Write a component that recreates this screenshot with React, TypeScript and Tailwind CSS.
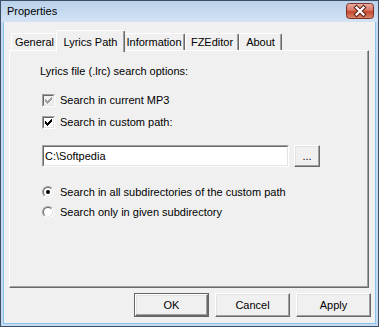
import React from 'react';

const TABS = [
  { title: 'General', w: 'w-[47px]' },
  { title: 'Lyrics Path', w: 'w-[69px]', active: true },
  { title: 'Information', w: 'w-[62px]' },
  { title: 'FZEditor', w: 'w-[54px]' },
  { title: 'About', w: 'w-[43px]' },
];

function CheckMark({ color }: { color: string }) {
  return (
    <svg width="7" height="7" viewBox="0 0 7 7" shapeRendering="crispEdges">
      <path
        fill={color}
        d="M0 2h1v3H0z M1 3h1v3H1z M2 4h1v3H2z M3 3h1v3H3z M4 2h1v3H4z M5 1h1v3H5z M6 0h1v3H6z"
      />
    </svg>
  );
}

function Checkbox({ label, checked, disabled }: { label: string; checked?: boolean; disabled?: boolean }) {
  return (
    <div className="flex items-center h-[14px] ml-[2px]">
      <span className="w-[13px] h-[13px] flex border border-t-[#a0a0a0] border-l-[#a0a0a0] border-r-white border-b-white">
        <span
          className={`flex-1 flex items-center justify-center border border-t-[#696969] border-l-[#696969] border-r-[#e3e3e3] border-b-[#e3e3e3] ${disabled ? 'bg-[#f0f0f0]' : 'bg-white'}`}
        >
          {checked && <CheckMark color={disabled ? '#a0a0a0' : '#000'} />}
        </span>
      </span>
      <span className="ml-[5px] leading-none">{label}</span>
    </div>
  );
}

function Radio({ label, checked }: { label: string; checked?: boolean }) {
  return (
    <div className="flex items-center h-[14px] ml-[2px]">
      <span className="w-[12px] h-[12px] flex rounded-full border border-t-[#a0a0a0] border-l-[#a0a0a0] border-r-white border-b-white">
        <span className="flex-1 flex items-center justify-center rounded-full border border-t-[#696969] border-l-[#696969] border-r-[#e3e3e3] border-b-[#e3e3e3] bg-white">
          {checked && <span className="w-[4px] h-[4px] rounded-full bg-black" />}
        </span>
      </span>
      <span className="ml-[6px] leading-none">{label}</span>
    </div>
  );
}

function PushButton({ label, isDefault }: { label: string; isDefault?: boolean }) {
  return (
    <div className={`w-[75px] h-[24px] flex ${isDefault ? 'border border-[#646464]' : ''}`}>
      <button className="flex-1 flex items-center justify-center bg-[#f0f0f0] border border-t-white border-l-white border-r-[#696969] border-b-[#696969] shadow-[inset_-1px_-1px_0_#a0a0a0,inset_1px_1px_0_#e3e3e3]">
        {label}
      </button>
    </div>
  );
}

function CloseButton() {
  return (
    <svg width="28" height="16" viewBox="0 0 28 16">
      <defs>
        <linearGradient id="cg" x1="0" y1="0" x2="0" y2="1">
          <stop offset="0" stopColor="#eab3a6" />
          <stop offset="0.45" stopColor="#d77562" />
          <stop offset="0.55" stopColor="#c4472f" />
          <stop offset="1" stopColor="#d98a6c" />
        </linearGradient>
      </defs>
      <rect x="0.5" y="0.5" width="27" height="15" rx="3" fill="url(#cg)" stroke="#7b3128" />
      <path d="M10.5 4.5 L17.5 11.5 M17.5 4.5 L10.5 11.5" stroke="#5c2018" strokeWidth="4.2" strokeLinecap="square" />
      <path d="M10.5 4.5 L17.5 11.5 M17.5 4.5 L10.5 11.5" stroke="#fff" strokeWidth="2.2" strokeLinecap="square" />
    </svg>
  );
}

export default function App() {
  return (
    <div className="w-[379px] h-[327px] flex flex-col bg-[#c4daf0] border border-[#3d4f66] text-[11px] text-black font-['Liberation_Sans',Arial,sans-serif]">
      {/* title bar */}
      <div className="h-[21px] flex items-center pl-[6px] pr-[4px] bg-gradient-to-b from-[#b9d1ea] to-[#d3e3f4]">
        <span className="flex-1 text-[11px] text-black">Properties</span>
        <div className="mt-[-2px]">
          <CloseButton />
        </div>
      </div>

      <div className="flex-1 mx-[2px] mb-[2px] flex flex-col bg-[#f0f0f0] border-l border-r border-b border-[#8cc3ea] pt-[8px]">
        {/* tabs */}
        <div className="h-[20px] flex items-end ml-[7px]">
          {TABS.map(t =>
            t.active ? (
              <div
                key={t.title}
                className={`${t.w} h-[22px] -mx-[2px] mb-[-2px] relative z-10 flex items-start justify-center pt-[3px] bg-[#f0f0f0] border-l border-t border-white border-r border-r-[#696969] rounded-t-[2px] shadow-[inset_-1px_0_0_#a0a0a0]`}
              >
                {t.title}
              </div>
            ) : (
              <div
                key={t.title}
                className={`${t.w} h-[17px] flex items-center justify-center bg-[#f0f0f0] border-l border-t border-white border-r border-r-[#696969] rounded-t-[2px] shadow-[inset_-1px_0_0_#a0a0a0]`}
              >
                {t.title}
              </div>
            )
          )}
        </div>

        {/* page */}
        <div className="w-[360px] h-[238px] ml-[5px] flex flex-col pl-[30px] border-l border-t border-white border-r border-b border-r-[#696969] border-b-[#696969] shadow-[inset_-1px_-1px_0_#a0a0a0]">
          <div className="mt-[13px] h-[14px] flex items-center">Lyrics file (.lrc) search options:</div>
          <div className="mt-[15px] text-[#000]">
            <Checkbox label="Search in current MP3" checked disabled />
          </div>
          <div className="mt-[8px]">
            <Checkbox label="Search in custom path:" checked />
          </div>
          <div className="mt-[16px] ml-[2px] flex gap-[5px]">
            <div className="w-[247px] h-[22px] flex border border-t-[#a0a0a0] border-l-[#a0a0a0] border-r-white border-b-white">
              <div className="flex-1 flex items-center pl-[1px] bg-white border border-t-[#696969] border-l-[#696969] border-r-[#e3e3e3] border-b-[#e3e3e3]">
                C:\Softpedia
              </div>
            </div>
            <button className="w-[26px] h-[22px] flex items-center justify-center bg-[#f0f0f0] border border-t-white border-l-white border-r-[#696969] border-b-[#696969] shadow-[inset_-1px_-1px_0_#a0a0a0,inset_1px_1px_0_#e3e3e3]">
              ...
            </button>
          </div>
          <div className="mt-[18px]">
            <Radio label="Search in all subdirectories of the custom path" checked />
          </div>
          <div className="mt-[6px]">
            <Radio label="Search only in given subdirectory" />
          </div>
        </div>

        {/* buttons */}
        <div className="mt-[5px] flex justify-end gap-[6px] mr-[4px]">
          <PushButton label="OK" isDefault />
          <PushButton label="Cancel" />
          <PushButton label="Apply" />
        </div>
      </div>
    </div>
  );
}
